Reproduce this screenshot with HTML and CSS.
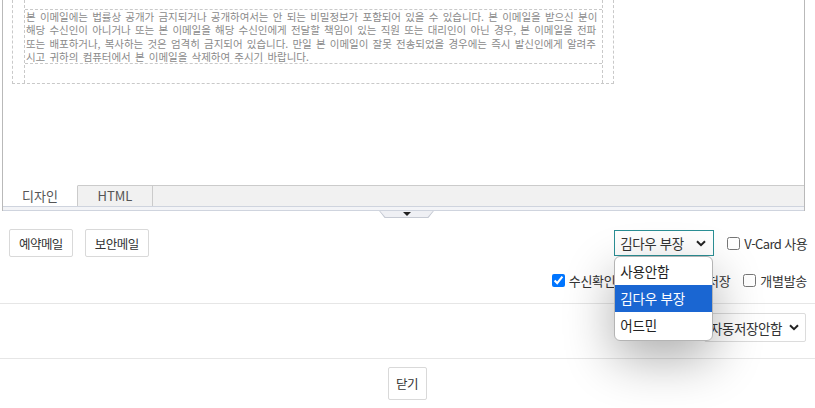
FILE: index.html
```html
<!DOCTYPE html>
<html lang="ko">
<head>
    <meta charset="UTF-8">
    <meta name="viewport" content="width=device-width, initial-scale=1.0">
    <title>메일 쓰기</title>
    <link rel="stylesheet" href="styles.css">
</head>
<body>
    <div class="editor">
        <div class="canvas">
            <div class="frame">
                <div class="col">
                    <div class="cell-top"></div>
                    <div class="cell-text">본 이메일에는 법률상 공개가 금지되거나 공개하여서는 안 되는 비밀정보가 포함되어 있을 수 있습니다. 본 이메일을 받으신 분이<br>해당 수신인이 아니거나 또는 본 이메일을 해당 수신인에게 전달할 책임이 있는 직원 또는 대리인이 아닌 경우, 본 이메일을 전파<br>또는 배포하거나, 복사하는 것은 엄격히 금지되어 있습니다. 만일 본 이메일이 잘못 전송되었을 경우에는 즉시 발신인에게 알려주<br>시고 귀하의 컴퓨터에서 본 이메일을 삭제하여 주시기 바랍니다.</div>
                    <div class="cell-bottom"></div>
                </div>
            </div>
        </div>
        <div class="tabs">
            <div class="tab active">디자인</div>
            <div class="tab">HTML</div>
            <div class="tab-fill"></div>
        </div>
        <div class="strip"></div>
    </div>
    <div class="handle"><span class="handle-arrow"></span></div>

    <div class="options">
        <div class="opt-left">
            <button class="btn">예약메일</button>
            <button class="btn">보안메일</button>
        </div>
        <div class="opt-right">
            <div class="opt-row first">
                <div class="select-wrap">
                    <div class="select focused">
                        <span>김다우 부장</span>
                        <svg class="chev" width="10" height="7" viewBox="0 0 10 7"><path d="M1 1.2 L5 5.2 L9 1.2" fill="none" stroke="#222" stroke-width="2"/></svg>
                    </div>
                    <ul class="dropdown">
                        <li>사용안함</li>
                        <li class="selected">김다우 부장</li>
                        <li>어드민</li>
                    </ul>
                </div>
                <label class="check vcard"><input type="checkbox">V-Card 사용</label>
            </div>
            <div class="opt-row second">
                <label class="check"><input type="checkbox" checked>수신확인</label>
                <label class="check"><input type="checkbox">보낸편지함 저장</label>
                <label class="check"><input type="checkbox">개별발송</label>
            </div>
        </div>
    </div>

    <div class="save-row">
        <div class="select save">
            <span>자동저장안함</span>
            <svg class="chev" width="10" height="7" viewBox="0 0 10 7"><path d="M1 1.2 L5 5.2 L9 1.2" fill="none" stroke="#222" stroke-width="2"/></svg>
        </div>
    </div>

    <div class="footer">
        <button class="btn close">닫기</button>
    </div>
</body>
</html>
```

FILE: styles.css
```css
body {
    margin: 0;
    padding: 0;
    width: 815px;
    height: 408px;
    overflow: hidden;
    background: #fff;
    font-family: "Noto Sans CJK KR", "Noto Sans", sans-serif;
    color: #333;
}
.editor {
    margin-left: 2px;
    width: 801px;
    border-left: 1px solid #b9b9b9;
    border-right: 1px solid #b9b9b9;
}
.canvas {
    height: 185px;
    overflow: hidden;
}
.frame {
    margin-left: 9px;
    width: 579px;
    padding: 0 10px 0 11px;
    border: 1px dashed #c9c9c9;
    border-top: none;
}
.col {
    border-left: 1px dashed #c9c9c9;
    border-right: 1px dashed #c9c9c9;
}
.cell-top {
    height: 9px;
    border-bottom: 1px dashed #c9c9c9;
}
.cell-text {
    height: 53px;
    padding-left: 1px;
    font-size: 10.5px;
    line-height: 13.25px;
    letter-spacing: -0.05px;
    word-spacing: 1.4px;
    color: #8a8a8a;
    white-space: nowrap;
    border-bottom: 1px dashed #c9c9c9;
}
.cell-bottom {
    height: 19px;
}
.tabs {
    display: flex;
    height: 21px;
    background: #f1f1f1;
    font-size: 13px;
}
.tab {
    width: 74px;
    line-height: 20px;
    text-align: center;
    border-top: 1px solid #cbcbcb;
    border-right: 1px solid #cbcbcb;
    color: #555;
}
.tab.active {
    background: #fff;
    border-top-color: #fff;
}
.tab-fill {
    flex: 1;
    border-top: 1px solid #cbcbcb;
}
.strip {
    height: 3px;
    background: #f3f4f7;
    border-top: 1px solid #cfd4de;
    border-bottom: 1px solid #cfd4de;
}
.handle {
    width: 55px;
    height: 7px;
    margin: 0 auto;
    position: relative;
    left: -1px;
    background: #eff0f4;
    clip-path: polygon(0 0, 100% 0, 90% 100%, 10% 100%);
    display: flex;
    justify-content: center;
}
.handle::before {
    content: "";
    position: absolute;
    inset: 0;
    background: #c6cad3;
    clip-path: polygon(0 0, 100% 0, 90% 100%, 10% 100%, 11% 85%, 88.5% 85%, 98% 0, 2% 0, 11.5% 85%, 10% 100%);
}
.handle-arrow {
    margin-top: 1px;
    width: 0;
    height: 0;
    border-left: 4px solid transparent;
    border-right: 4px solid transparent;
    border-top: 4px solid #222;
}
.options {
    display: flex;
    justify-content: space-between;
    padding: 11px 8px 14px 9px;
    border-bottom: 1px solid #e6e6e6;
}
.opt-left {
    display: flex;
    gap: 12px;
    align-items: flex-start;
}
.btn {
    height: 28px;
    padding: 0 9px;
    background: #fff;
    border: 1px solid #d9d9d9;
    border-radius: 2px;
    font-family: "Noto Sans CJK KR", sans-serif;
    font-size: 12.5px;
    letter-spacing: -0.55px;
    color: #333;
}
.opt-right {
    display: flex;
    flex-direction: column;
    align-items: flex-end;
}
.opt-row {
    display: flex;
    align-items: center;
    gap: 13px;
    font-size: 13px;
    letter-spacing: -0.3px;
}
.opt-row.first {
    margin-top: 1px;
    height: 26px;
    gap: 13px;
}
.opt-row.second {
    margin-top: 15px;
    height: 18px;
}
.check {
    display: flex;
    align-items: center;
    color: #333;
}
.check.vcard {
    letter-spacing: -0.6px;
}
.check input {
    margin: 0 4px 0 0;
    width: 13px;
    height: 13px;
}
.select-wrap {
    position: relative;
    z-index: 2;
}
.select {
    display: flex;
    align-items: center;
    justify-content: space-between;
    box-sizing: border-box;
    background: #fff;
    border: 1px solid #d3d3d3;
    font-size: 13.5px;
    letter-spacing: -0.4px;
    color: #333;
}
.select.focused {
    width: 100px;
    height: 26px;
    padding: 0 7px 0 5px;
    border-color: #2b8f95;
}
.dropdown {
    position: absolute;
    top: 26px;
    left: 0;
    width: 99px;
    margin: 0;
    padding: 1px 0;
    list-style: none;
    background: #fff;
    border: 1px solid #b4b4b4;
    border-radius: 6px;
    box-shadow: 0 18px 50px rgba(0, 0, 0, 0.32);
    font-size: 13.5px;
    letter-spacing: -0.2px;
    color: #222;
    box-sizing: border-box;
    overflow: hidden;
}
.dropdown li {
    height: 27px;
    line-height: 26px;
    padding-left: 5px;
}
.dropdown li.selected {
    background: #1a66d2;
    color: #fff;
}
.save-row {
    display: flex;
    justify-content: flex-end;
    padding: 9px 9px 16px 0;
    border-bottom: 1px solid #e6e6e6;
}
.select.save {
    width: 102px;
    height: 29px;
    padding: 0 6px 0 5px;
    border-color: #dcdcdc;
    border-radius: 2px;
}
.footer {
    display: flex;
    justify-content: center;
    padding-top: 8px;
}
.btn.close {
    height: 33px;
    width: 39px;
    padding: 0;
    margin-left: -1px;
}
```
